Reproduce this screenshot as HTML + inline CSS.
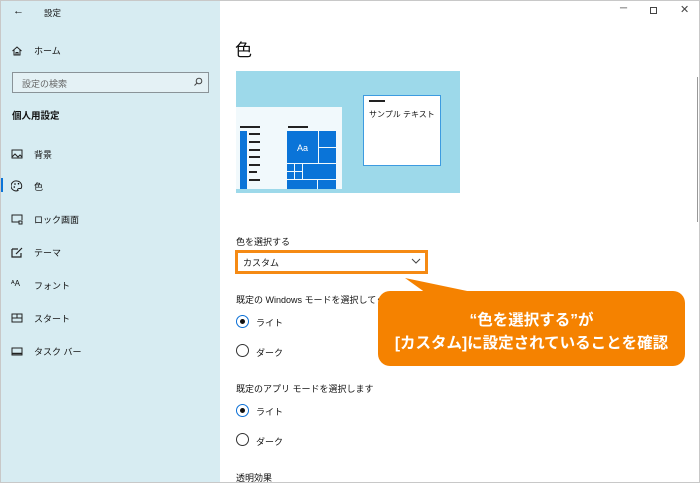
<!DOCTYPE html>
<html><head><meta charset="utf-8"><style>
*{margin:0;padding:0;box-sizing:border-box}
body{width:700px;height:483px;overflow:hidden;background:#fff;font-family:"Liberation Sans","Noto Sans CJK JP",sans-serif;color:#111;position:relative;font-size:9.5px}
.side{position:absolute;left:0;top:0;width:220px;height:483px;background:#d7ecf2}
.a{position:absolute;white-space:nowrap}
.frame{position:absolute;left:0;top:0;width:700px;height:483px;border:1px solid #c8c8c8;pointer-events:none}
.ic{position:absolute;left:11px;width:12px;height:12px}
.radio{position:absolute;left:236px;width:13px;height:13px;border-radius:50%;border:1.5px solid #333}
.radio.on{border-color:#0a6fd6}
.radio.on::after{content:"";position:absolute;left:2.5px;top:2.5px;width:5px;height:5px;border-radius:50%;background:#111}
.bar{position:absolute;height:1.5px;background:#222}
.t{position:absolute;background:#0a74d8}
</style></head><body>
<div class="side"></div>
<div class="a" style="left:13px;top:5px;font-size:11px">←</div>
<div class="a" style="left:44px;top:7px;font-size:8.5px">設定</div>
<svg class="ic" style="top:45px" viewBox="0 0 12 12"><path d="M1.5 6L6 2l4.5 4M3 5v5h6V5M5 10V7.5h2V10" fill="none" stroke="#222" stroke-width="1"/></svg>
<div class="a" style="left:34px;top:44px;font-size:9px">ホーム</div>
<div class="a" style="left:12px;top:72px;width:197px;height:21px;border:1.5px solid #8a9398;background:#e4f1f5"></div>
<div class="a" style="left:22px;top:77px;font-size:9px;color:#666">設定の検索</div>
<svg class="a" style="left:193px;top:77px" width="10" height="10" viewBox="0 0 10 10"><circle cx="6" cy="4" r="2.8" fill="none" stroke="#444"/><path d="M4 6L1.5 8.5" stroke="#444"/></svg>
<div class="a" style="left:12px;top:108px;font-size:9.5px;font-weight:bold">個人用設定</div>
<svg class="ic" style="top:148px" viewBox="0 0 12 12"><rect x="1" y="2" width="10" height="8" fill="none" stroke="#222"/><path d="M1 9l3-3 3 3 2-2 2 2" fill="none" stroke="#222"/></svg>
<div class="a" style="left:34px;top:148px;font-size:9px">背景</div>
<div class="a" style="left:0;top:178px;width:3px;height:14px;background:#0a74d8"></div>
<svg class="ic" style="top:180px" viewBox="0 0 12 12"><path d="M6 1a5 5 0 1 0 1 9.5c-1-1 0-2 1-2h2A5 5 0 0 0 6 1z" fill="none" stroke="#222"/><circle cx="4" cy="4" r=".8"/><circle cx="7.5" cy="3.7" r=".8"/><circle cx="3.3" cy="7" r=".8"/></svg>
<div class="a" style="left:34px;top:180px;font-size:9px">色</div>
<svg class="ic" style="top:213px" viewBox="0 0 12 12"><path d="M8 9H1V2h10v5" fill="none" stroke="#222"/><rect x="8" y="8" width="3" height="3" fill="none" stroke="#222"/></svg>
<div class="a" style="left:34px;top:213px;font-size:9px">ロック画面</div>
<svg class="ic" style="top:246px" viewBox="0 0 12 12"><path d="M1 3h6M1 3v8h9V7M5 8l6-6" fill="none" stroke="#222" stroke-width="1.2"/></svg>
<div class="a" style="left:34px;top:246px;font-size:9px">テーマ</div>
<div class="a" style="left:11px;top:279px;font-size:8px">ᴬA</div>
<div class="a" style="left:34px;top:279px;font-size:9px">フォント</div>
<svg class="ic" style="top:312px" viewBox="0 0 12 12"><rect x="1" y="2" width="10" height="8" fill="none" stroke="#222"/><path d="M1 6h10M6 2v4" stroke="#222"/></svg>
<div class="a" style="left:34px;top:312px;font-size:9px">スタート</div>
<svg class="ic" style="top:345px" viewBox="0 0 12 12"><rect x="1" y="3" width="10" height="7" fill="none" stroke="#222"/><path d="M1 8.5h10" stroke="#222" stroke-width="1.5"/></svg>
<div class="a" style="left:34px;top:345px;font-size:9px">タスク バー</div>

<div class="a" style="left:620px;top:3px;font-size:10px;color:#444">─</div>
<div class="a" style="left:650px;top:7px;width:7px;height:7px;border:1px solid #444"></div>
<div class="a" style="left:680px;top:3px;font-size:11px;color:#444">✕</div>
<div class="a" style="left:697px;top:77px;width:1px;height:145px;background:#999"></div>

<div class="a" style="left:235px;top:36px;font-size:17px">色</div>
<div class="a" style="left:236px;top:71px;width:224px;height:122px;background:#9dd9ea"></div>
<div class="a" style="left:236px;top:107px;width:106px;height:82px;background:#f1f9fc"></div>
<div class="bar" style="left:240px;top:126px;width:20px"></div>
<div class="t" style="left:240px;top:131px;width:7px;height:58px"></div>
<div class="bar" style="left:249px;top:133px;width:11px"></div><div class="bar" style="left:249px;top:141px;width:11px"></div><div class="bar" style="left:249px;top:149px;width:11px"></div><div class="bar" style="left:249px;top:156px;width:11px"></div><div class="bar" style="left:249px;top:164px;width:11px"></div><div class="bar" style="left:249px;top:171px;width:8px"></div><div class="bar" style="left:249px;top:179px;width:11px"></div>
<div class="bar" style="left:288px;top:126px;width:20px"></div>
<div class="t" style="left:287px;top:131px;width:31px;height:32px"></div>
<div class="a" style="left:297px;top:143px;font-size:9px;color:#fff">Aa</div>
<div class="t" style="left:319px;top:131px;width:17px;height:16px"></div>
<div class="t" style="left:319px;top:148px;width:17px;height:15px"></div>
<div class="t" style="left:287px;top:164px;width:7px;height:7px"></div><div class="t" style="left:295px;top:164px;width:7px;height:7px"></div>
<div class="t" style="left:287px;top:172px;width:7px;height:7px"></div><div class="t" style="left:295px;top:172px;width:7px;height:7px"></div>
<div class="t" style="left:303px;top:164px;width:33px;height:15px"></div>
<div class="t" style="left:287px;top:180px;width:30px;height:9px"></div><div class="t" style="left:318px;top:180px;width:18px;height:9px"></div>
<div class="a" style="left:363px;top:95px;width:78px;height:71px;background:#fff;border:1px solid #3d9be0"></div>
<div class="bar" style="left:369px;top:100px;width:16px"></div>
<div class="a" style="left:369px;top:109px;font-size:8px">サンプル テキスト</div>

<div class="a" style="left:236px;top:235px;font-size:9px">色を選択する</div>
<div class="a" style="left:235px;top:250px;width:193px;height:24px;border:3px solid #f58a14;background:#fff"></div>
<div class="a" style="left:243px;top:256px;font-size:9px">カスタム</div>
<svg class="a" style="left:411px;top:258px" width="10" height="6"><path d="M1 1l4 4 4-4" fill="none" stroke="#444"/></svg>
<div class="a" style="left:236px;top:293px;font-size:9px">既定の Windows モードを選択してください</div>
<div class="radio on" style="top:315px"></div><div class="a" style="left:256px;top:316px;font-size:9px">ライト</div>
<div class="radio" style="top:344px"></div><div class="a" style="left:256px;top:346px;font-size:9px">ダーク</div>
<div class="a" style="left:236px;top:382px;font-size:9px">既定のアプリ モードを選択します</div>
<div class="radio on" style="top:404px"></div><div class="a" style="left:256px;top:405px;font-size:9px">ライト</div>
<div class="radio" style="top:433px"></div><div class="a" style="left:256px;top:435px;font-size:9px">ダーク</div>
<div class="a" style="left:236px;top:471px;font-size:9px">透明効果</div>

<svg class="a" style="left:400px;top:275px" width="120" height="30"><path d="M5 3L110 25L40 28Z" fill="#f58200"/></svg>
<div class="a" style="left:378px;top:291px;width:307px;height:75px;background:#f58200;border-radius:12px;color:#fff;font-weight:bold;font-size:15.5px;text-align:center;line-height:23px;padding-top:18px">“色を選択する”が<br>[カスタム]に設定されていることを確認</div>
<div class="frame"></div>
</body></html>
